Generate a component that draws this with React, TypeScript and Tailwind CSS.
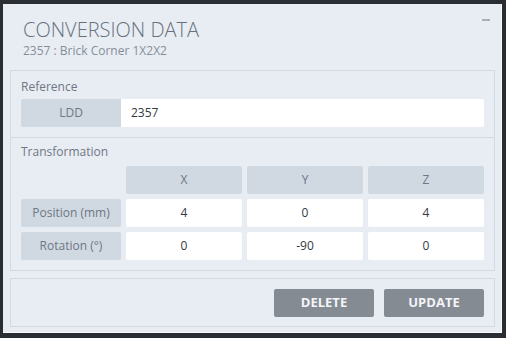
import React from "react";

const font = { fontFamily: '"Open Sans", "Noto Sans", sans-serif' };

function Label({ children, className = "" }: { children: React.ReactNode; className?: string }) {
  return (
    <div
      className={`flex h-[28px] items-center justify-center rounded-[2px] bg-[#d0d8e2] text-[12px] text-[#6e7782] ${className}`}
    >
      {children}
    </div>
  );
}

function Field({ children, className = "" }: { children: React.ReactNode; className?: string }) {
  return (
    <div
      className={`flex h-[28px] items-center justify-center rounded-[2px] bg-white text-[12px] text-[#333a42] ${className}`}
    >
      {children}
    </div>
  );
}

export default function App() {
  const rows = [
    { name: "Position (mm)", values: ["4", "0", "4"] },
    { name: "Rotation (°)", values: ["0", "-90", "0"] },
  ];

  return (
    <div className="h-[338px] w-[506px] bg-[#2a2d31] pl-[3px] pt-[4px]" style={font}>
      <div className="relative flex h-[329px] w-[499px] flex-col border-r border-b border-white/70 bg-[#e8edf4] pl-[7px] pr-[6px] pt-[13px]">
        <div className="absolute right-[11px] top-[15px] h-[2px] w-[8px] bg-[#a8b0bb]" />

        <div className="pl-[13px]">
          <h1 className="text-[20px] font-light leading-[26px] text-[#68707a]">CONVERSION DATA</h1>
          <p className="text-[12px] leading-[16px] text-[#868e98]">2357 : Brick Corner 1X2X2</p>
        </div>

        <div className="mt-[11px] border border-[#d3d9e2]">
          <div className="px-[10px] pb-[10px] pt-[6px]">
            <div className="text-[12px] leading-[20px] text-[#6e7782]">Reference</div>
            <div className="mt-[2px] flex">
              <Label className="w-[100px] rounded-r-none">LDD</Label>
              <div className="flex h-[28px] flex-1 items-center rounded-r-[2px] bg-white pl-[10px] text-[12px] text-[#333a42]">
                2357
              </div>
            </div>
          </div>

          <div className="border-t border-[#d3d9e2] px-[10px] pb-[10px] pt-[4px]">
            <div className="text-[12px] leading-[20px] text-[#6e7782]">Transformation</div>
            <div className="mt-[4px] grid grid-cols-[100px_1fr_1fr_1fr] gap-[5px]">
              <div />
              <Label>X</Label>
              <Label>Y</Label>
              <Label>Z</Label>
              {rows.map((r) => (
                <React.Fragment key={r.name}>
                  <Label>{r.name}</Label>
                  {r.values.map((v, i) => (
                    <Field key={i}>{v}</Field>
                  ))}
                </React.Fragment>
              ))}
            </div>
          </div>
        </div>

        <div className="mt-[7px] flex justify-end gap-[10px] border border-[#d3d9e2] px-[10px] pb-[9px] pt-[10px]">
          <button className="h-[28px] w-[100px] rounded-[2px] bg-[#858b93] text-[13px] font-bold text-[#f3f5f8]">
            DELETE
          </button>
          <button className="h-[28px] w-[100px] rounded-[2px] bg-[#858b93] text-[13px] font-bold text-[#f3f5f8]">
            UPDATE
          </button>
        </div>
      </div>
    </div>
  );
}
